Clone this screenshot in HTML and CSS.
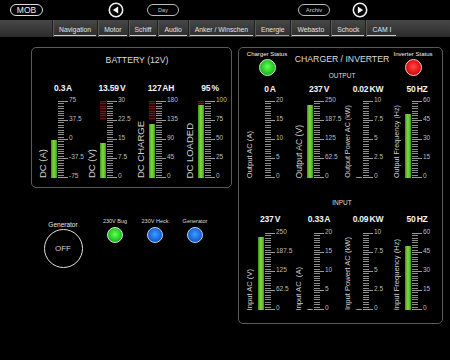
FILE: index.html
```html
<!DOCTYPE html>
<html>
<head>
<meta charset="utf-8">
<link rel="stylesheet" href="styles.css">
</head>
<body>
<header class="topbar">
  <div class="pill mob">MOB</div>
  <div class="circ prev"><svg width="16" height="16" viewBox="0 0 16 16"><circle cx="8" cy="8" r="6.7" fill="none" stroke="#eee" stroke-width="1.6"/><polygon points="10.2,4.6 10.2,11.4 4.9,8" fill="#fff"/></svg></div>
  <div class="pill small day">Day</div>
  <div class="pill small archiv">Archiv</div>
  <div class="circ next"><svg width="16" height="16" viewBox="0 0 16 16"><circle cx="8" cy="8" r="6.7" fill="none" stroke="#eee" stroke-width="1.6"/><polygon points="5.8,4.6 5.8,11.4 11.1,8" fill="#fff"/></svg></div>
</header>

<nav class="tabs">
  <div class="tab"><span>Navigation</span></div>
  <div class="tab"><span>Motor</span></div>
  <div class="tab"><span>Schiff</span></div>
  <div class="tab"><span>Audio</span></div>
  <div class="tab"><span>Anker / Winschen</span></div>
  <div class="tab active"><span>Energie</span></div>
  <div class="tab"><span>Webasto</span></div>
  <div class="tab"><span>Schock</span></div>
  <div class="tab"><span>CAM I</span></div>
</nav>

<main class="main">
  <div class="left">
    <section class="panel battery">
      <h2 class="ptitle">BATTERY (12V)</h2>
      <div class="cols">
        <div class="col">
          <div class="val">0.3 A</div>
          <div class="gauge">
            <div class="vl big">DC (A)</div>
            <div class="track"><div class="fill" style="height:50%"></div></div>
            <div class="scale">
              <div class="mk"><i></i><span>75</span></div>
              <div class="mk"><i></i><span>37.5</span></div>
              <div class="mk"><i></i><span>0</span></div>
              <div class="mk"><i></i><span>-37.5</span></div>
              <div class="mk"><i></i><span>-75</span></div>
            </div>
          </div>
        </div>
        <div class="col">
          <div class="val">13.59 V</div>
          <div class="gauge">
            <div class="vl big">DC (V)</div>
            <div class="track"><div class="red" style="height:25%"></div><div class="fill" style="height:45.3%"></div></div>
            <div class="scale">
              <div class="mk"><i></i><span>30</span></div>
              <div class="mk"><i></i><span>22.5</span></div>
              <div class="mk"><i></i><span>15</span></div>
              <div class="mk"><i></i><span>7.5</span></div>
              <div class="mk"><i></i><span>0</span></div>
            </div>
          </div>
        </div>
        <div class="col">
          <div class="val">127 AH</div>
          <div class="gauge">
            <div class="vl big">DC CHARGE</div>
            <div class="track"><div class="red" style="height:25%"></div><div class="fill" style="height:70.6%"></div></div>
            <div class="scale">
              <div class="mk"><i></i><span>180</span></div>
              <div class="mk"><i></i><span>135</span></div>
              <div class="mk"><i></i><span>90</span></div>
              <div class="mk"><i></i><span>45</span></div>
              <div class="mk"><i></i><span>0</span></div>
            </div>
          </div>
        </div>
        <div class="col">
          <div class="val">95 %</div>
          <div class="gauge">
            <div class="vl big">DC LOADED</div>
            <div class="track"><div class="red" style="height:5%"></div><div class="fill" style="height:95%"></div></div>
            <div class="scale">
              <div class="mk"><i></i><span>100</span></div>
              <div class="mk"><i></i><span>75</span></div>
              <div class="mk"><i></i><span>50</span></div>
              <div class="mk"><i></i><span>25</span></div>
              <div class="mk"><i></i><span>0</span></div>
            </div>
          </div>
        </div>
      </div>
    </section>

    <div class="controls">
      <div class="gen">
        <div class="gen-label">Generator</div>
        <div class="gen-btn">OFF</div>
      </div>
      <div class="led-group">
        <div class="led-label">230V Bug</div>
        <div class="led green"></div>
      </div>
      <div class="led-group">
        <div class="led-label">230V Heck</div>
        <div class="led blue"></div>
      </div>
      <div class="led-group">
        <div class="led-label">Generator</div>
        <div class="led blue"></div>
      </div>
    </div>
  </div>

  <section class="panel charger">
    <div class="chead">
      <div class="status">
        <div class="status-label">Charger Status</div>
        <div class="led big-led green"></div>
      </div>
      <div class="ctitle">
        <h2 class="ptitle2">CHARGER / INVERTER</h2>
        <div class="sub">OUTPUT</div>
      </div>
      <div class="status">
        <div class="status-label">Inverter Status</div>
        <div class="led big-led red"></div>
      </div>
    </div>

    <div class="cols out">
      <div class="col">
        <div class="val">0 A</div>
        <div class="gauge">
          <div class="vl">Output AC (A)</div>
          <div class="track"></div>
          <div class="scale">
            <div class="mk"><i></i><span>20</span></div>
            <div class="mk"><i></i><span>15</span></div>
            <div class="mk"><i></i><span>10</span></div>
            <div class="mk"><i></i><span>5</span></div>
            <div class="mk"><i></i><span>0</span></div>
          </div>
        </div>
      </div>
      <div class="col">
        <div class="val">237 V</div>
        <div class="gauge">
          <div class="vl lg">Output AC (V)</div>
          <div class="track"><div class="fill" style="height:94.8%"></div></div>
          <div class="scale">
            <div class="mk"><i></i><span>250</span></div>
            <div class="mk"><i></i><span>187.5</span></div>
            <div class="mk"><i></i><span>125</span></div>
            <div class="mk"><i></i><span>62.5</span></div>
            <div class="mk"><i></i><span>0</span></div>
          </div>
        </div>
      </div>
      <div class="col">
        <div class="val">0.02 KW</div>
        <div class="gauge">
          <div class="vl sm">Output Power AC (kW)</div>
          <div class="track"><div class="fill" style="height:1px"></div></div>
          <div class="scale">
            <div class="mk"><i></i><span>10</span></div>
            <div class="mk"><i></i><span>7.5</span></div>
            <div class="mk"><i></i><span>5</span></div>
            <div class="mk"><i></i><span>2.5</span></div>
            <div class="mk"><i></i><span>0</span></div>
          </div>
        </div>
      </div>
      <div class="col">
        <div class="val">50 HZ</div>
        <div class="gauge">
          <div class="vl sm">Output Frequency (Hz)</div>
          <div class="track"><div class="fill" style="height:83.3%"></div></div>
          <div class="scale">
            <div class="mk"><i></i><span>60</span></div>
            <div class="mk"><i></i><span>45</span></div>
            <div class="mk"><i></i><span>30</span></div>
            <div class="mk"><i></i><span>15</span></div>
            <div class="mk"><i></i><span>0</span></div>
          </div>
        </div>
      </div>
    </div>

    <div class="sub sub-in">INPUT</div>

    <div class="cols in">
      <div class="col">
        <div class="val">237 V</div>
        <div class="gauge">
          <div class="vl">Input AC (V)</div>
          <div class="track"><div class="fill" style="height:94.8%"></div></div>
          <div class="scale">
            <div class="mk"><i></i><span>250</span></div>
            <div class="mk"><i></i><span>187.5</span></div>
            <div class="mk"><i></i><span>125</span></div>
            <div class="mk"><i></i><span>62.5</span></div>
            <div class="mk"><i></i><span>0</span></div>
          </div>
        </div>
      </div>
      <div class="col">
        <div class="val">0.33 A</div>
        <div class="gauge">
          <div class="vl">Input AC &nbsp;(A)</div>
          <div class="track"><div class="fill" style="height:1.65%"></div></div>
          <div class="scale">
            <div class="mk"><i></i><span>20</span></div>
            <div class="mk"><i></i><span>15</span></div>
            <div class="mk"><i></i><span>10</span></div>
            <div class="mk"><i></i><span>5</span></div>
            <div class="mk"><i></i><span>0</span></div>
          </div>
        </div>
      </div>
      <div class="col">
        <div class="val">0.09 KW</div>
        <div class="gauge">
          <div class="vl">Input Powert AC (kW)</div>
          <div class="track"><div class="fill" style="height:1px"></div></div>
          <div class="scale">
            <div class="mk"><i></i><span>10</span></div>
            <div class="mk"><i></i><span>7.5</span></div>
            <div class="mk"><i></i><span>5</span></div>
            <div class="mk"><i></i><span>2.5</span></div>
            <div class="mk"><i></i><span>0</span></div>
          </div>
        </div>
      </div>
      <div class="col">
        <div class="val">50 HZ</div>
        <div class="gauge">
          <div class="vl">Input Frequency (Hz)</div>
          <div class="track"><div class="fill" style="height:83.3%"></div></div>
          <div class="scale">
            <div class="mk"><i></i><span>60</span></div>
            <div class="mk"><i></i><span>45</span></div>
            <div class="mk"><i></i><span>30</span></div>
            <div class="mk"><i></i><span>15</span></div>
            <div class="mk"><i></i><span>0</span></div>
          </div>
        </div>
      </div>
    </div>
  </section>
</main>
</body>
</html>
```

FILE: styles.css
```css
* { box-sizing: border-box; }
html, body { margin: 0; padding: 0; }
body {
  width: 450px;
  height: 360px;
  overflow: hidden;
  background: #000;
  color: #ddd;
  font-family: "Liberation Sans", Arial, sans-serif;
}

/* top bar */
.topbar {
  height: 20px;
  display: flex;
  align-items: center;
}
.pill {
  height: 12px;
  border: 1.5px solid #ddd;
  border-radius: 6px;
  display: flex;
  align-items: center;
  justify-content: center;
  color: #f2f2f2;
  flex: none;
}
.mob { width: 33px; margin-left: 10px; font-size: 8.5px; }
.small { width: 32px; font-size: 5.5px; color: #ccc; border-color: #bbb; border-width: 1px; }
.day { margin-left: 23px; }
.archiv { margin-left: 119px; font-size: 6px; }
.circ { width: 16px; height: 16px; flex: none; display: flex; }
.prev { margin-left: 65px; }
.next { margin-left: 22px; }

/* tabs */
.tabs {
  height: 17px;
  display: flex;
  padding-left: 52px;
  background: linear-gradient(to bottom, #474747, #2c2c2c);
}
.tab {
  display: flex;
  flex-direction: column;
  justify-content: flex-end;
  padding: 0 1px;
  border-left: 1px solid #1e1e1e;
  box-shadow: inset 1px 0 0 #575757;
}
.tab span {
  display: block;
  padding: 0 5px;
  font-size: 6.8px;
  line-height: 11px;
  color: #e2e2e2;
  border-bottom: 1.5px solid #cfcfcf;
  margin-bottom: 1px;
  white-space: nowrap;
}
.tab.active span { border-bottom-color: #5fce45; }

/* main */
.main {
  display: flex;
  align-items: flex-start;
  gap: 6px;
  padding: 10px 0 0 31px;
}
.panel {
  border: 1px solid #5a5a5a;
  border-radius: 5px;
  background: #000;
}
.battery { width: 201px; padding-bottom: 9px; }
.charger { width: 205px; padding-bottom: 13px; }

.ptitle {
  margin: 0;
  padding: 6px 0 0 11px;
  font-size: 8.7px;
  font-weight: normal;
  line-height: 12px;
  text-align: center;
  color: #ddd;
}
.cols {
  display: flex;
  padding-left: 5px;
  margin-top: 17px;
}
.col {
  width: 49px;
  flex: none;
  display: flex;
  flex-direction: column;
}
.val {
  padding-left: 3px;
  text-align: center;
  font-size: 8.5px;
  font-weight: bold;
  line-height: 10px;
  color: #f4f4f4;
  letter-spacing: -0.2px;
  word-spacing: -1px;
  white-space: nowrap;
}
.gauge {
  height: 77px;
  margin-top: 8px;
  display: flex;
  align-items: flex-end;
}
.vl {
  width: 12px;
  flex: none;
  writing-mode: vertical-rl;
  transform: rotate(180deg);
  white-space: nowrap;
  font-size: 7.6px;
  line-height: 12px;
  color: #cfcfcf;
  text-align: left;
}
.vl.big { font-size: 9.5px; }
.vl.lg { font-size: 8.6px; }
.vl.sm { font-size: 7.2px; }

.track {
  width: 6px;
  height: 77px;
  margin-left: 2px;
  flex: none;
  display: flex;
  flex-direction: column;
  justify-content: flex-end;
}
.red {
  margin-bottom: auto;
  background: repeating-linear-gradient(to bottom, #6e1414 0 1px, #2a0606 1px 2.375px);
}
.fill {
  background: linear-gradient(to right, #3c961c 0%, #7fd63c 45%, #6cc631 70%, #3a921b 100%);
}
.scale {
  width: 30px;
  height: 77px;
  margin-left: 1px;
  flex: none;
  display: flex;
  flex-direction: column;
  justify-content: space-between;
  background: repeating-linear-gradient(to bottom, #8c8c8c 0 1px, transparent 1px 2.375px) left top / 6px 77px no-repeat;
}
.mk {
  height: 1px;
  display: flex;
  align-items: center;
}
.mk i {
  width: 10px;
  height: 1px;
  background: #9a9a9a;
  flex: none;
}
.mk span {
  font-size: 6.5px;
  line-height: 8px;
  color: #bdbdbd;
  margin: 0 0 3px 1px;
  white-space: nowrap;
}

/* controls */
.controls {
  display: flex;
  align-items: flex-start;
  margin-top: 29px;
}
.gen {
  width: 42px;
  margin: 4px 11px 0 11px;
  display: flex;
  flex-direction: column;
  align-items: center;
}
.gen-label {
  font-size: 6.5px;
  line-height: 8px;
  color: #e8e8e8;
  white-space: nowrap;
}
.gen-btn {
  width: 39px;
  height: 39px;
  border: 1.5px solid #e0e0e0;
  border-radius: 50%;
  display: flex;
  align-items: center;
  justify-content: center;
  font-size: 8px;
  color: #cfcfcf;
}
.led-group {
  width: 40px;
  display: flex;
  flex-direction: column;
  align-items: center;
}
.led-label {
  font-size: 5.5px;
  line-height: 8px;
  color: #ddd;
  white-space: nowrap;
}
.led {
  width: 16px;
  height: 16px;
  margin-top: 2px;
  border-radius: 50%;
}
.led.green {
  background: radial-gradient(circle at 50% 45%, #66ff5a 0%, #22cc22 55%, #0b7a0b 100%);
  border: 1.5px solid #d6ead6;
}
.led.blue {
  background: radial-gradient(circle at 50% 45%, #3f9cff 0%, #1662d8 60%, #0a3a90 100%);
  border: 1.5px solid #b8d4f0;
}
.led.red {
  background: radial-gradient(circle at 50% 45%, #ff4a4a 0%, #e01010 60%, #8a0000 100%);
  border: 1.5px solid #f0d0d0;
}
.led.big-led { width: 17px; height: 17px; margin-top: 1px; }

/* charger header */
.chead {
  display: flex;
  align-items: flex-start;
  padding: 2px 9px 0 8px;
}
.status {
  width: 40px;
  flex: none;
  display: flex;
  flex-direction: column;
  align-items: center;
}
.status-label {
  font-size: 6px;
  line-height: 8px;
  color: #f2f2f2;
  white-space: nowrap;
}
.ctitle {
  flex: 1;
  padding-left: 4px;
  text-align: center;
}
.ptitle2 {
  margin: 4px 0 0;
  font-size: 8.7px;
  font-weight: normal;
  line-height: 11px;
  color: #ddd;
}
.sub {
  margin-top: 7px;
  font-size: 6.5px;
  line-height: 8px;
  color: #ddd;
  text-align: center;
}
.sub-in { margin-top: 21px; padding-left: 3px; }
.cols.out { margin-top: 4px; }
.cols.out .gauge { margin-top: 7px; }
.cols.in { margin-top: 7px; }
.cols.in .gauge { margin-top: 9px; }
```
